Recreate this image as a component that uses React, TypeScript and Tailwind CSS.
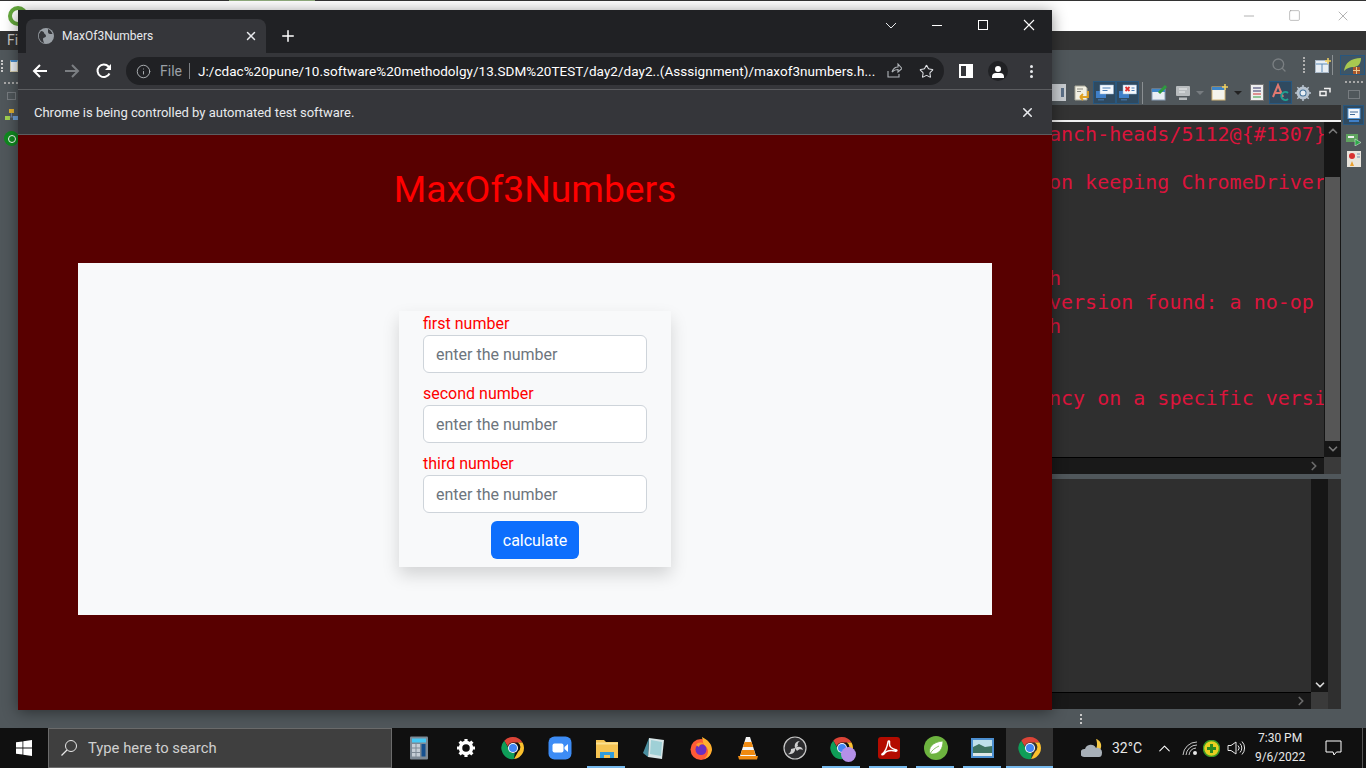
import { ChevronDown, ChevronRight, ChevronUp, Info, Minus, Plus, Search, Square, Star, X } from "lucide-react";

const codeLines = [
  "anch-heads/5112@{#1307}",
  "",
  "on keeping ChromeDriver",
  "",
  "",
  "",
  "h",
  "version found: a no-op",
  "h",
  "",
  "",
  "ncy on a specific versi",
];

const ChromeIcon = ({ size = 24 }: { size?: number }) => (
  <svg width={size} height={size} viewBox="0 0 48 48">
    <path d="M24 2a22 22 0 0 1 19 11H24a11 11 0 0 0-10.5 7.5L6.5 9.5A22 22 0 0 1 24 2z" fill="#db4437" />
    <path d="M43 13a22 22 0 0 1-17 33l8.500-15a11 11 0 0 0-1-18z" fill="#fbc02d" />
    <path d="M26 46A22 22 0 0 1 6.500 9.500l8 14a11 11 0 0 0 13 10.500z" fill="#0f9d58" />
    <circle cx="24" cy="24" r="10" fill="#fff" />
    <circle cx="24" cy="24" r="8" fill="#4285f4" />
  </svg>
);

const Calculator = () => (
  <svg width="20" height="24" viewBox="0 0 20 24">
    <rect width="18" height="23" x="1" y="0.5" rx="1" fill="#7d8a96" />
    <rect width="14" height="4" x="3" y="2.500" fill="#45c8f5" />
    <g fill="#c5ced6">
      <rect width="3.500" height="3.500" x="3" y="8" />
      <rect width="3.500" height="3.500" x="7.500" y="8" />
      <rect width="3.500" height="3.500" x="3" y="12.500" />
      <rect width="3.500" height="3.500" x="7.500" y="12.500" />
      <rect width="3.500" height="3.500" x="3" y="17" />
      <rect width="3.500" height="3.500" x="7.500" y="17" />
    </g>
    <rect width="4" height="12.500" x="12.500" y="8" fill="#15508f" />
  </svg>
);

const Gear = () => (
  <svg width="20" height="20" viewBox="0 0 20 20">
    <circle cx="10" cy="10" r="5.500" fill="none" stroke="#fff" strokeWidth="3.500" />
    <path d="M10 1v3M10 16v3M1 10h3M16 10h3M3.600 3.600l2.100 2.100M14.300 14.300l2.100 2.100M3.600 16.400l2.100-2.100M14.300 5.700l2.100-2.100" stroke="#fff" strokeWidth="3.200" />
  </svg>
);

const ZoomApp = () => (
  <svg width="24" height="24" viewBox="0 0 24 24">
    <rect width="23" height="23" x="0.5" y="0.5" rx="6" fill="#3d8cf5" />
    <rect width="11" height="9" x="4.500" y="7.500" rx="2" fill="#fff" />
    <path d="M16.500 11l3.500-3v8l-3.500-3z" fill="#fff" />
  </svg>
);

const Folder = () => (
  <svg width="22" height="22" viewBox="0 0 22 22">
    <path d="M0 3h8l2 2h12v16H0z" fill="#f5c453" />
    <rect width="22" height="2" y="5.500" fill="#fbe08f" />
    <path d="M4 21v-6h14v6h-4v-3H8v3z" fill="#2f9bdc" />
  </svg>
);

const Notepad = () => (
  <svg width="22" height="24" viewBox="0 0 22 24">
    <path d="M6 2l15 2-2 19-14-2z" fill="#d8e6e8" />
    <path d="M6 2L0 17l5 4z" fill="#4a8fa0" />
    <path d="M8 4l11 2-1 14-11-2z" fill="#9fd0d6" />
  </svg>
);

const Firefox = () => (
  <svg width="24" height="24" viewBox="0 0 24 24">
    <circle cx="12" cy="13.500" r="10.500" fill="#ff5a36" />
    <path d="M13 1c6 3 10 7 10 13a11 11 0 0 1-8 9c4-3 5-8 3-11-1-2-4-3-4-6z" fill="#ffb02e" />
    <circle cx="12" cy="13.500" r="5.500" fill="#6b2fc0" />
    <path d="M7 9c2-3 6-3 8-1-3 0-5 1-5 3z" fill="#ff9a2e" />
  </svg>
);

const Vlc = () => (
  <svg width="22" height="24" viewBox="0 0 22 24">
    <path d="M9 1h4l6 19H3z" fill="#f5f5f5" />
    <path d="M7.500 6h7l1.500 5H6zM5 14h12l1.500 5h-15z" fill="#f08a10" />
    <path d="M1 20h20l-1 3.500H2z" fill="#f08a10" />
  </svg>
);

const Obs = () => (
  <svg width="24" height="24" viewBox="0 0 24 24">
    <circle cx="12" cy="12" r="11" fill="#2c2c2e" stroke="#c8c8c8" strokeWidth="1.200" />
    <path d="M12 12c-1-4 1-7 5-7-2 1-3 3-2 5zM12 12c3-2 7-2 8 2-2-1-4-1-6 1zM12 12c1 4-3 7-7 6 2-1 3-2 3-5z" fill="#d0d0d0" />
  </svg>
);

const Pdf = () => (
  <svg width="22" height="22" viewBox="0 0 22 22">
    <rect width="22" height="22" rx="3" fill="#b30b00" />
    <path d="M4 17c3-2 5-6 6-12 .3-2 2-1 1.500 1-.5 3 2 6 7 7 1 .5 0 1.500-1.500 1-5-1-9 0-11 3-1 1-2.500 1-2-.0z" fill="none" stroke="#fff" strokeWidth="1.500" />
  </svg>
);

const Spring = () => (
  <svg width="24" height="24" viewBox="0 0 24 24">
    <circle cx="12" cy="12" r="12" fill="#6db33f" />
    <path d="M6 18c-2-6 2-12 13-13 0 8-4 13-10 13-1 0-2 0-3 0zM6 18c2-4 5-6 9-8" fill="#fff" stroke="#6db33f" strokeWidth="0.800" />
  </svg>
);

const Photos = () => (
  <svg width="23" height="20" viewBox="0 0 23 20">
    <rect width="23" height="20" fill="#4c8fd0" />
    <rect width="19" height="16" x="2" y="2" fill="#bfe0ea" />
    <path d="M2 9l6-3 6 3 7-1v10H2z" fill="#3f7361" />
    <rect width="19" height="3" x="2" y="15" fill="#dfe7e8" />
  </svg>
);

const Tb = ({ bar, active, barWide, children }: { bar?: boolean; active?: boolean; barWide?: boolean; children: React.ReactNode }) => (
  <div className={`relative flex h-full w-[47px] shrink-0 items-center justify-center ${active ? "bg-[#333333]" : ""}`}>
    {children}
    {bar && <div className={`absolute bottom-0 h-[2px] bg-[#76b9ed] ${barWide ? "left-0 right-0" : "left-[4px] right-[5px]"}`} />}
  </div>
);

const ChatIcon = ({ broken }: { broken?: boolean }) => (
  <svg width="19" height="17" viewBox="0 0 19 17">
    <rect x="1" y="7" width="10" height="7" fill="#3f7fc8" />
    <rect x="3" y="15" width="6" height="1.500" fill="#3f6a98" />
    <rect x="5" y="1" width="13.500" height="9" fill="#f4f8fc" stroke="#8fb4d8" strokeWidth="0.500" />
    {broken ? (
      <path d="M7.500 3l4 4M11.500 3l-4 4" stroke="#e03030" strokeWidth="1.800" />
    ) : (
      <path d="M7.500 4h8M7.500 6.500h5" stroke="#4a7fb8" />
    )}
    {broken && <path d="M13.500 4h3M13.500 6.500h3" stroke="#4a7fb8" />}
  </svg>
);

const EclipseToolbar = () => (
  <div className="flex h-[25px] items-center bg-[#50575b] pl-[1003px]">
    <div className="ml-[24px] flex h-[17px] w-[14px] items-center justify-end bg-[#c8ccd0] pr-[2px]">
      <div className="h-[9px] w-[3px] bg-[#5c7088]" />
    </div>
    <svg className="ml-[8px]" width="16" height="16" viewBox="0 0 16 16">
      <path d="M1 1h10l2 2v12H1z" fill="#f1efe2" stroke="#a8a898" />
      <path d="M3 4h6M3 6.500h4" stroke="#8a8a80" />
      <path d="M6 12h8V6M6 12l3-3M6 12l3 3" stroke="#e0a020" strokeWidth="1.800" fill="none" />
    </svg>
    <div className="ml-[3px] flex h-[23px] w-[23px] items-center justify-center border border-[#27577f] bg-[#2f4a60]">
      <ChatIcon />
    </div>
    <div className="flex h-[23px] w-[23px] items-center justify-center border border-[#27577f] bg-[#2f4a60]">
      <ChatIcon broken />
    </div>
    <div className="ml-[3px] h-[22px] w-px bg-[#8a8f92]" />
    <svg className="ml-[8px]" width="17" height="17" viewBox="0 0 17 17">
      <rect x="1" y="5" width="13" height="11" fill="#e8eef4" stroke="#8aa0b8" />
      <rect x="1" y="5" width="13" height="3" fill="#3f86c8" />
      <path d="M8 9l7-7" stroke="#2e9a3e" strokeWidth="3" />
    </svg>
    <svg className="ml-[7px]" width="16" height="16" viewBox="0 0 16 16">
      <rect x="1" y="1" width="14" height="10" rx="1" fill="#b8bcbe" />
      <path d="M4 4h8M4 7h6" stroke="#eceeef" />
      <rect x="4" y="12.500" width="8" height="2.500" fill="#b8bcbe" />
    </svg>
    <div className="ml-[5px] h-0 w-0 border-x-[4px] border-t-[4px] border-x-transparent border-t-[#777c80]" />
    <svg className="ml-[7px]" width="17" height="17" viewBox="0 0 17 17">
      <rect x="1" y="3" width="13" height="13" fill="#f4f4ec" stroke="#d4b878" />
      <rect x="1" y="3" width="13" height="3" fill="#3f86c8" />
      <path d="M14 0v6M11 3h6" stroke="#f0d060" strokeWidth="1.500" />
    </svg>
    <div className="ml-[6px] h-0 w-0 border-x-[4px] border-t-[4px] border-x-transparent border-t-[#222222]" />
    <svg className="ml-[8px]" width="14" height="17" viewBox="0 0 14 17">
      <rect x="0.500" y="0.500" width="13" height="16" fill="#eeeeee" stroke="#777777" />
      <path d="M3 4h8M3 7h8" stroke="#333366" />
      <path d="M3 10h8" stroke="#cc3333" />
      <path d="M3 13h8" stroke="#2e9a3e" />
    </svg>
    <div className="ml-[5px] flex h-[23px] w-[23px] items-center justify-center border border-[#27577f] bg-[#2f4a60]">
      <svg width="19" height="19" viewBox="0 0 19 19">
        <path d="M2 14L7 2l5 12M4 10h6" fill="none" stroke="#e07870" strokeWidth="2" />
        <path d="M17 10a4 4 0 1 0 0 6" fill="none" stroke="#20a090" strokeWidth="2" />
      </svg>
    </div>
    <svg className="ml-[3px]" width="16" height="16" viewBox="0 0 16 16">
      <circle cx="8" cy="8" r="5" fill="#3f6f98" stroke="#b8c4d0" strokeWidth="3" />
      <path d="M8 0v2M8 14v2M0 8h2M14 8h2M2.300 2.300l1.500 1.500M12.200 12.200l1.500 1.500M2.300 13.700l1.500-1.500M12.200 3.800l1.500-1.500" stroke="#b8c4d0" strokeWidth="1.500" />
      <circle cx="8" cy="8" r="2.500" fill="#e8eef4" />
    </svg>
    <svg className="ml-[8px]" width="12" height="12" viewBox="0 0 12 12">
      <path d="M5 1.500h6v4M1 4.500h6v4H1z" fill="none" stroke="#f0f0f0" strokeWidth="1.500" />
    </svg>
  </div>
);

const LeftRail = () => (
  <div className="flex w-[25px] shrink-0 flex-col bg-[#50575b]">
    <div className="mt-[10px] flex items-start pl-[1px]">
      <div className="h-[12px] border-l-[2px] border-dotted border-[#c8c8c8]" />
      <div className="ml-[7px] h-[12px] w-[8px] border border-[#d8d0b0] border-t-2 border-t-[#4a90d0] bg-[#f0f4f8]" />
    </div>
    <div className="ml-[4px] mt-[10px] h-0 w-[14px] border-t-2 border-dotted border-[#a8a8a8]" />
    <div className="ml-[7px] mt-[8px] h-[8px] w-[9px] border border-[#777c80]" />
    <svg className="ml-[5px] mt-[9px]" width="13" height="13" viewBox="0 0 13 13">
      <rect x="4" y="0" width="5" height="4" fill="#e0b030" />
      <path d="M6.500 4v4M3 8h7" stroke="#7080a0" />
      <rect x="0" y="7" width="5" height="4" fill="#a0d050" />
      <rect x="8" y="7" width="5" height="4" fill="#70a0d8" />
    </svg>
    <div className="ml-[4px] mt-[9px] flex h-[15px] w-[15px] items-center justify-center rounded-full bg-[#0f8a1f]">
      <div className="h-[8px] w-[8px] rounded-full border border-white" />
    </div>
  </div>
);

const RightRail = () => (
  <div className="flex w-[25px] shrink-0 flex-col items-center">
    <div className="-ml-[2px] mt-[5px] flex h-[20px] w-[25px] items-center justify-center border border-[#27577f] bg-[#3f5565]">
      <svg width="19" height="17" viewBox="0 0 19 17">
        <path d="M1 14C2 6 8 1 18 1c0 7-4 9-8 9-3 0-6 1-9 4z" fill="#a8c850" />
        <rect x="10" y="10" width="7" height="7" fill="#a8562a" />
        <path d="M13.500 10v7M10 13.500h7" stroke="#f0c890" />
      </svg>
    </div>
    <div className="mt-[6px] h-0 w-[18px] border-t-2 border-dotted border-[#a8a8a8]" />
    <div className="mt-[7px] h-[9px] w-[12px] border border-[#777c80]" />
    <div className="mt-[6px] flex h-[20px] w-[21px] items-center justify-center border border-[#27577f] bg-[#2f4a60]">
      <svg width="14" height="14" viewBox="0 0 14 14">
        <rect x="1" y="0.500" width="12" height="10" fill="#f4f8fc" stroke="#5a9ad8" />
        <path d="M3 4h8M3 6.500h5" stroke="#3f6a98" />
        <rect x="2" y="12" width="10" height="2" fill="#3f7fc8" />
      </svg>
    </div>
    <svg className="mt-[8px]" width="15" height="13" viewBox="0 0 15 13">
      <rect x="0" y="1" width="12" height="8" fill="#5fa35f" />
      <rect x="2" y="3" width="6" height="2" fill="#f0f0f0" />
      <path d="M9 6l6 3.500L9 13z" fill="#2ea84a" stroke="#e8f0e8" strokeWidth="0.500" />
    </svg>
    <svg className="mt-[5px]" width="14" height="16" viewBox="0 0 14 16">
      <rect x="0" y="0" width="14" height="16" fill="#e8e4dc" />
      <circle cx="5" cy="5" r="3" fill="#d83030" />
      <path d="M3 15l2-5 2 5z" fill="#e8a030" />
      <path d="M10 3h3M10 6h3" stroke="#7090b0" />
    </svg>
  </div>
);

const Eclipse = () => (
  <div className="flex h-[728px] flex-col bg-[#50575b]">
    <div className="h-px bg-[#333333]">
      <div className="ml-[229px] h-px w-[86px] bg-[#8faa7c]" />
    </div>
    <div className="flex h-[30px] items-center bg-white pl-[8px]">
      <div className="h-[20px] w-[20px] rounded-full border-[4px] border-[#64a83c]" />
      <div className="ml-auto flex text-[#8c8c8c]">
        <Minus size={16} strokeWidth={1} className="mr-[31px]" />
        <Square size={13} strokeWidth={1} className="mr-[34px] mt-[1px]" />
        <X size={16} strokeWidth={1} className="mr-[15px]" />
      </div>
    </div>
    <div className="h-[19px] bg-[#333333] pl-[7px] font-['Roboto',sans-serif] text-[14px] leading-[19px] text-[#c8c8c8]">File</div>
    <div className="relative flex min-h-0 flex-1">
      <LeftRail />
      <div className="flex min-w-0 flex-1 flex-col">
        <div className="flex h-[30px] items-center justify-end bg-[#50575b] pr-[8px]">
          <Search size={16} className="mr-[16px] text-[#7a7f82]" />
          <div className="mr-[10px] h-[16px] border-l-2 border-dotted border-[#b0b0b0]" />
          <svg className="mr-[1px]" width="16" height="15" viewBox="0 0 16 15">
            <rect x="0.500" y="2.500" width="13" height="12" fill="#e8eef4" stroke="#a8b8c8" />
            <path d="M1 6h12M7 6v8" stroke="#5a8ab8" />
            <path d="M13 0v6M10 3h6" stroke="#f0d060" strokeWidth="1.500" />
          </svg>
          <div className="h-[20px] w-px bg-[#8a8f92]" />
        </div>
        <EclipseToolbar />
        <div className="h-[15px] bg-[#333333]" />
        <div className="h-[2px] bg-[#f0f0f0]" />
        <div className="flex h-[335px]">
          <div className="min-w-0 flex-1 overflow-hidden whitespace-pre bg-[#2f2f2f] pl-[1024px] font-['DejaVu_Sans_Mono',monospace] text-[20px] leading-[24px] text-[#dc143c]">
            {codeLines.map((line, i) => (
              <div key={i} className="h-[24px]">{line}</div>
            ))}
          </div>
          <div className="flex w-[17px] shrink-0 flex-col items-center bg-[#161616] text-[#777777]">
            <ChevronUp size={14} strokeWidth={3} className="mt-[2px]" />
            <div className="mt-[39px] h-[264px] w-[15px] bg-[#565656]" />
            <ChevronDown size={14} strokeWidth={3} className="mt-auto mb-[1px]" />
          </div>
        </div>
        <div className="flex h-[17px]">
          <div className="flex flex-1 items-center justify-end border-t border-black bg-[#191919] pr-[3px] text-[#6a6a6a]">
            <ChevronRight size={14} strokeWidth={3} />
          </div>
          <div className="w-[17px] bg-[#3a3a3a]" />
        </div>
        <div className="h-[5px] bg-[#50575b]" />
        <div className="flex flex-1">
          <div className="flex flex-1 flex-col">
            <div className="flex-1 bg-[#2f2f2f]" />
            <div className="flex h-[17px] items-center justify-end border-t border-black bg-[#191919] pr-[3px] text-[#6a6a6a]">
              <ChevronRight size={14} strokeWidth={3} />
            </div>
          </div>
          <div className="flex w-[17px] flex-col">
            <div className="flex flex-1 items-end justify-center bg-[#161616] text-[#d8d8d8]">
              <ChevronDown size={14} strokeWidth={3} />
            </div>
            <div className="h-[17px] bg-[#3a3a3a]" />
          </div>
          <div className="w-[13px] bg-[#2f2f2f]" />
        </div>
        <div className="flex h-[19px] items-center pl-[1055px]">
          <div className="h-[10px] border-l-2 border-dotted border-[#c8c8c8]" />
        </div>
      </div>
      <RightRail />
    </div>
  </div>
);

const Field = ({ label }: { label: string }) => (
  <div className="mb-[8px]">
    <div className="h-[24px] pt-px text-[16px] leading-[24px] text-[#ff0000]">{label}</div>
    <input
      className="block h-[38px] w-full rounded-[6px] border border-[#ced4da] bg-white px-[12px] text-[16px] placeholder:text-[#6c757d]"
      placeholder="enter the number"
    />
  </div>
);

const ChromeWindow = () => (
  <div className="absolute left-[18px] top-[10px] flex h-[700px] w-[1034px] flex-col overflow-hidden bg-[#202124] font-['Roboto',sans-serif] shadow-[0_2px_14px_rgba(0,0,0,0.45)]">
    <div className="flex h-[43px] shrink-0 items-end bg-[#202124] pl-[8px]">
      <div className="flex h-[34px] w-[240px] items-center rounded-t-[8px] bg-[#35363a] pl-[12px] pr-[8px]">
        <svg width="16" height="16" viewBox="0 0 16 16">
          <circle cx="8" cy="8" r="8" fill="#9aa0a6" />
          <path d="M3 3c2 0 3 1 3 2s2 1 2 3-3 1-3 3 1 3 1 4C3 14 0 11 1 6zM10 1c2 .5 4 3 4.500 5H12c-1 0-2-1-2-2z" fill="#35363a" />
        </svg>
        <span className="ml-[8px] text-[12px] text-[#e8eaed]">MaxOf3Numbers</span>
        <X size={14} strokeWidth={2.500} className="ml-auto text-[#e8eaed]" />
      </div>
      <Plus size={18} strokeWidth={2} className="mb-[8px] ml-[13px] text-white" />
      <div className="ml-auto flex h-[30px] self-start text-[#e8eaed]">
        <div className="flex w-[46px] items-center justify-center">
          <svg width="12" height="7" viewBox="0 0 12 7">
            <path d="M1 1l5 5 5-5" fill="none" stroke="#e8eaed" />
          </svg>
        </div>
        <div className="flex w-[46px] items-center justify-center">
          <div className="h-px w-[10px] bg-white" />
        </div>
        <div className="flex w-[46px] items-center justify-center">
          <div className="h-[10px] w-[10px] border border-white" />
        </div>
        <div className="flex w-[46px] items-center justify-center">
          <svg width="12" height="12" viewBox="0 0 12 12">
            <path d="M1 1l10 10M11 1L1 11" stroke="#fff" strokeWidth="1.100" />
          </svg>
        </div>
      </div>
    </div>
    <div className="flex h-[36px] shrink-0 items-center bg-[#35363a] text-[#e8eaed]">
      <svg className="ml-[14px]" width="16" height="16" viewBox="0 0 16 16">
        <path d="M15 8H2M8 2L2 8l6 6" fill="none" stroke="#fff" strokeWidth="2" />
      </svg>
      <svg className="ml-[16px]" width="16" height="16" viewBox="0 0 16 16">
        <path d="M1 8h13M8 2l6 6-6 6" fill="none" stroke="#7b7e82" strokeWidth="2" />
      </svg>
      <svg className="ml-[16px]" width="16" height="16" viewBox="0 0 16 16">
        <path d="M13.500 10.500A6.300 6.300 0 1 1 12.500 3.500L14.500 5.500" fill="none" stroke="#fff" strokeWidth="2" />
        <path d="M15 1v6H9z" fill="#fff" />
      </svg>
      <div className="ml-[14px] flex h-[28px] w-[818px] items-center rounded-[14px] bg-[#202124] pl-[10px]">
        <Info size={15} strokeWidth={1.500} className="shrink-0 text-[#b0b4b8]" />
        <span className="ml-[9px] shrink-0 text-[14px] text-[#9aa0a6]">File</span>
        <div className="ml-[7px] h-[16px] w-px shrink-0 bg-[#7b7e82]" />
        <span className="ml-[8px] whitespace-nowrap text-[13.5px] tracking-[0.04px] text-white">J:/cdac%20pune/10.software%20methodolgy/13.SDM%20TEST/day2/day2..(Asssignment)/maxof3numbers.h...</span>
        <svg className="ml-auto shrink-0" width="16" height="16" viewBox="0 0 16 16">
          <path d="M2 8v6h11v-3M6 9c1-3 3-5 6-5V1l4 4.500L12 9V6.500C9.500 6.500 7.500 7.500 6 9z" fill="none" stroke="#b0b4b8" strokeWidth="1.100" />
        </svg>
        <Star size={15} strokeWidth={1.700} className="ml-[17px] mr-[10px] shrink-0 text-[#dfe1e5]" />
      </div>
      <div className="ml-[15px] flex h-[14px] w-[14px] justify-end border-2 border-white bg-transparent">
        <div className="h-full w-[5px] bg-white" />
      </div>
      <div className="ml-[15px] flex h-[20px] w-[20px] flex-col items-center justify-end overflow-hidden rounded-full bg-[#202124]">
        <div className="mb-[1px] h-[6px] w-[6px] rounded-full bg-white" />
        <div className="mb-[3px] h-[5px] w-[12px] rounded-t-[4px] bg-white" />
      </div>
      <div className="ml-[22px] flex flex-col gap-[2px]">
        <div className="h-[3px] w-[3px] rounded-full bg-[#e8eaed]" />
        <div className="h-[3px] w-[3px] rounded-full bg-[#e8eaed]" />
        <div className="h-[3px] w-[3px] rounded-full bg-[#e8eaed]" />
      </div>
    </div>
    <div className="flex h-[46px] shrink-0 items-center border-y border-[#5c5d60] bg-[#35363a] pl-[16px] pr-[17px]">
      <span className="pt-px text-[13px] text-[#e8eaed]">Chrome is being controlled by automated test software.</span>
      <X size={15} strokeWidth={2.500} className="ml-auto text-[#e8eaed]" />
    </div>
    <div className="flex min-h-0 flex-1 flex-col items-center bg-[#580000] px-[60px]">
      <h1 className="mt-[28px] h-[52px] text-[37.2px] leading-[52px] text-[#ff0000]">MaxOf3Numbers</h1>
      <div className="mt-[48px] flex h-[352px] w-full justify-center bg-[#f8f9fa] pt-[48px]">
        <div className="h-[256px] w-[272px] bg-[#f8f9fa] px-[24px] pb-[8px] shadow-[0_8px_16px_rgba(0,0,0,0.15)]">
          <Field label="first number" />
          <Field label="second number" />
          <Field label="third number" />
          <div className="flex justify-center">
            <button className="h-[38px] w-[88px] rounded-[6px] bg-[#0d6efd] pt-px text-[16px] text-white">calculate</button>
          </div>
        </div>
      </div>
    </div>
  </div>
);

const Taskbar = () => (
  <div className="flex h-[40px] items-stretch bg-[#101010] font-['Roboto',sans-serif] text-white">
    <div className="flex w-[48px] shrink-0 items-center justify-center">
      <svg width="16" height="16" viewBox="0 0 16 16">
        <path d="M0 2.300l6.500-.9v6.200H0zM7.300 1.300L16 0v7.600H7.300zM0 8.400h6.500v6.200L0 13.700zM7.300 8.400H16V16l-8.700-1.200z" fill="#fff" />
      </svg>
    </div>
    <div className="flex w-[344px] shrink-0 items-center border border-[#6b6b6b] bg-[#3f3f3f] pl-[11px]">
      <svg width="18" height="18" viewBox="0 0 18 18">
        <circle cx="11" cy="7" r="5.500" fill="none" stroke="#e8e8e8" strokeWidth="1" />
        <path d="M7 11l-5.500 5.500" stroke="#e8e8e8" strokeWidth="1.200" />
      </svg>
      <span className="ml-[10px] text-[14.800px] text-[#d0d0d0]">Type here to search</span>
    </div>
    <div className="flex pl-[3px]">
      <Tb><Calculator /></Tb>
      <Tb><Gear /></Tb>
      <Tb><ChromeIcon /></Tb>
      <Tb><ZoomApp /></Tb>
      <Tb bar><Folder /></Tb>
      <Tb><Notepad /></Tb>
      <Tb><Firefox /></Tb>
      <Tb><Vlc /></Tb>
      <Tb><Obs /></Tb>
      <Tb bar>
        <ChromeIcon />
        <div className="absolute bottom-[6px] right-[9px] h-[15px] w-[15px] rounded-full bg-[#b490e8]" />
      </Tb>
      <Tb bar><Pdf /></Tb>
      <Tb bar><Spring /></Tb>
      <Tb bar><Photos /></Tb>
      <Tb active bar barWide><ChromeIcon /></Tb>
    </div>
    <div className="ml-[28px] flex items-center">
      <svg width="24" height="22" viewBox="0 0 24 22">
        <path d="M15 2c4 1 7 6 4 11-2 2-4 2-6 1 3-2 4-7 2-12z" fill="#f5c842" />
        <path d="M3 20a4 4 0 0 1 1-8 6 6 0 0 1 11-1 4.500 4.500 0 0 1 6 4.500c0 3-1 4.500-3 4.500z" fill="#a8b0b8" />
      </svg>
      <span className="ml-[7px] text-[14px] text-[#e8e8e8]">32°C</span>
      <ChevronUp size={19} strokeWidth={1.300} className="ml-[13px]" />
      <svg className="ml-[8px]" width="16" height="16" viewBox="0 0 16 16">
        <path d="M1 15a14 14 0 0 1 14-13M4 15A11 11 0 0 1 15 5M7 15a8 8 0 0 1 7-7" fill="none" stroke="#c8c8c8" />
        <circle cx="13" cy="13" r="2" fill="#e8e8e8" />
      </svg>
      <svg className="ml-[5px]" width="17" height="17" viewBox="0 0 17 17">
        <circle cx="8.500" cy="8.500" r="8" fill="#e8d020" stroke="#3a9a28" strokeWidth="1.500" />
        <path d="M8.500 4v9M4 8.500h9" stroke="#2a8a20" strokeWidth="3" />
      </svg>
      <svg className="ml-[7px]" width="18" height="16" viewBox="0 0 18 16">
        <path d="M1 5.500h3L9 2v12L4 10.500H1z" fill="none" stroke="#e8e8e8" />
        <path d="M11 5.500a3.500 3.500 0 0 1 0 5M13 3.500a6.500 6.500 0 0 1 0 9M15 1.500a9.500 9.500 0 0 1 0 13" fill="none" stroke="#e8e8e8" />
      </svg>
    </div>
    <div className="ml-[5px] flex w-[60px] shrink-0 flex-col items-center justify-center text-[12px] leading-[19px] text-[#e8e8e8]">
      <span>7:30 PM</span>
      <span>9/6/2022</span>
    </div>
    <div className="ml-[8px] flex w-[30px] items-center justify-center">
      <svg width="17" height="16" viewBox="0 0 17 16">
        <path d="M1 1h15v11h-4.500L9 15l-1-3H1z" fill="none" stroke="#fff" />
      </svg>
    </div>
    <div className="ml-auto mr-[3px] w-px bg-[#555555]" />
  </div>
);

export default function App() {
  return (
    <div className="relative h-[768px] w-[1366px] overflow-hidden">
      <Eclipse />
      <Taskbar />
      <ChromeWindow />
    </div>
  );
}
